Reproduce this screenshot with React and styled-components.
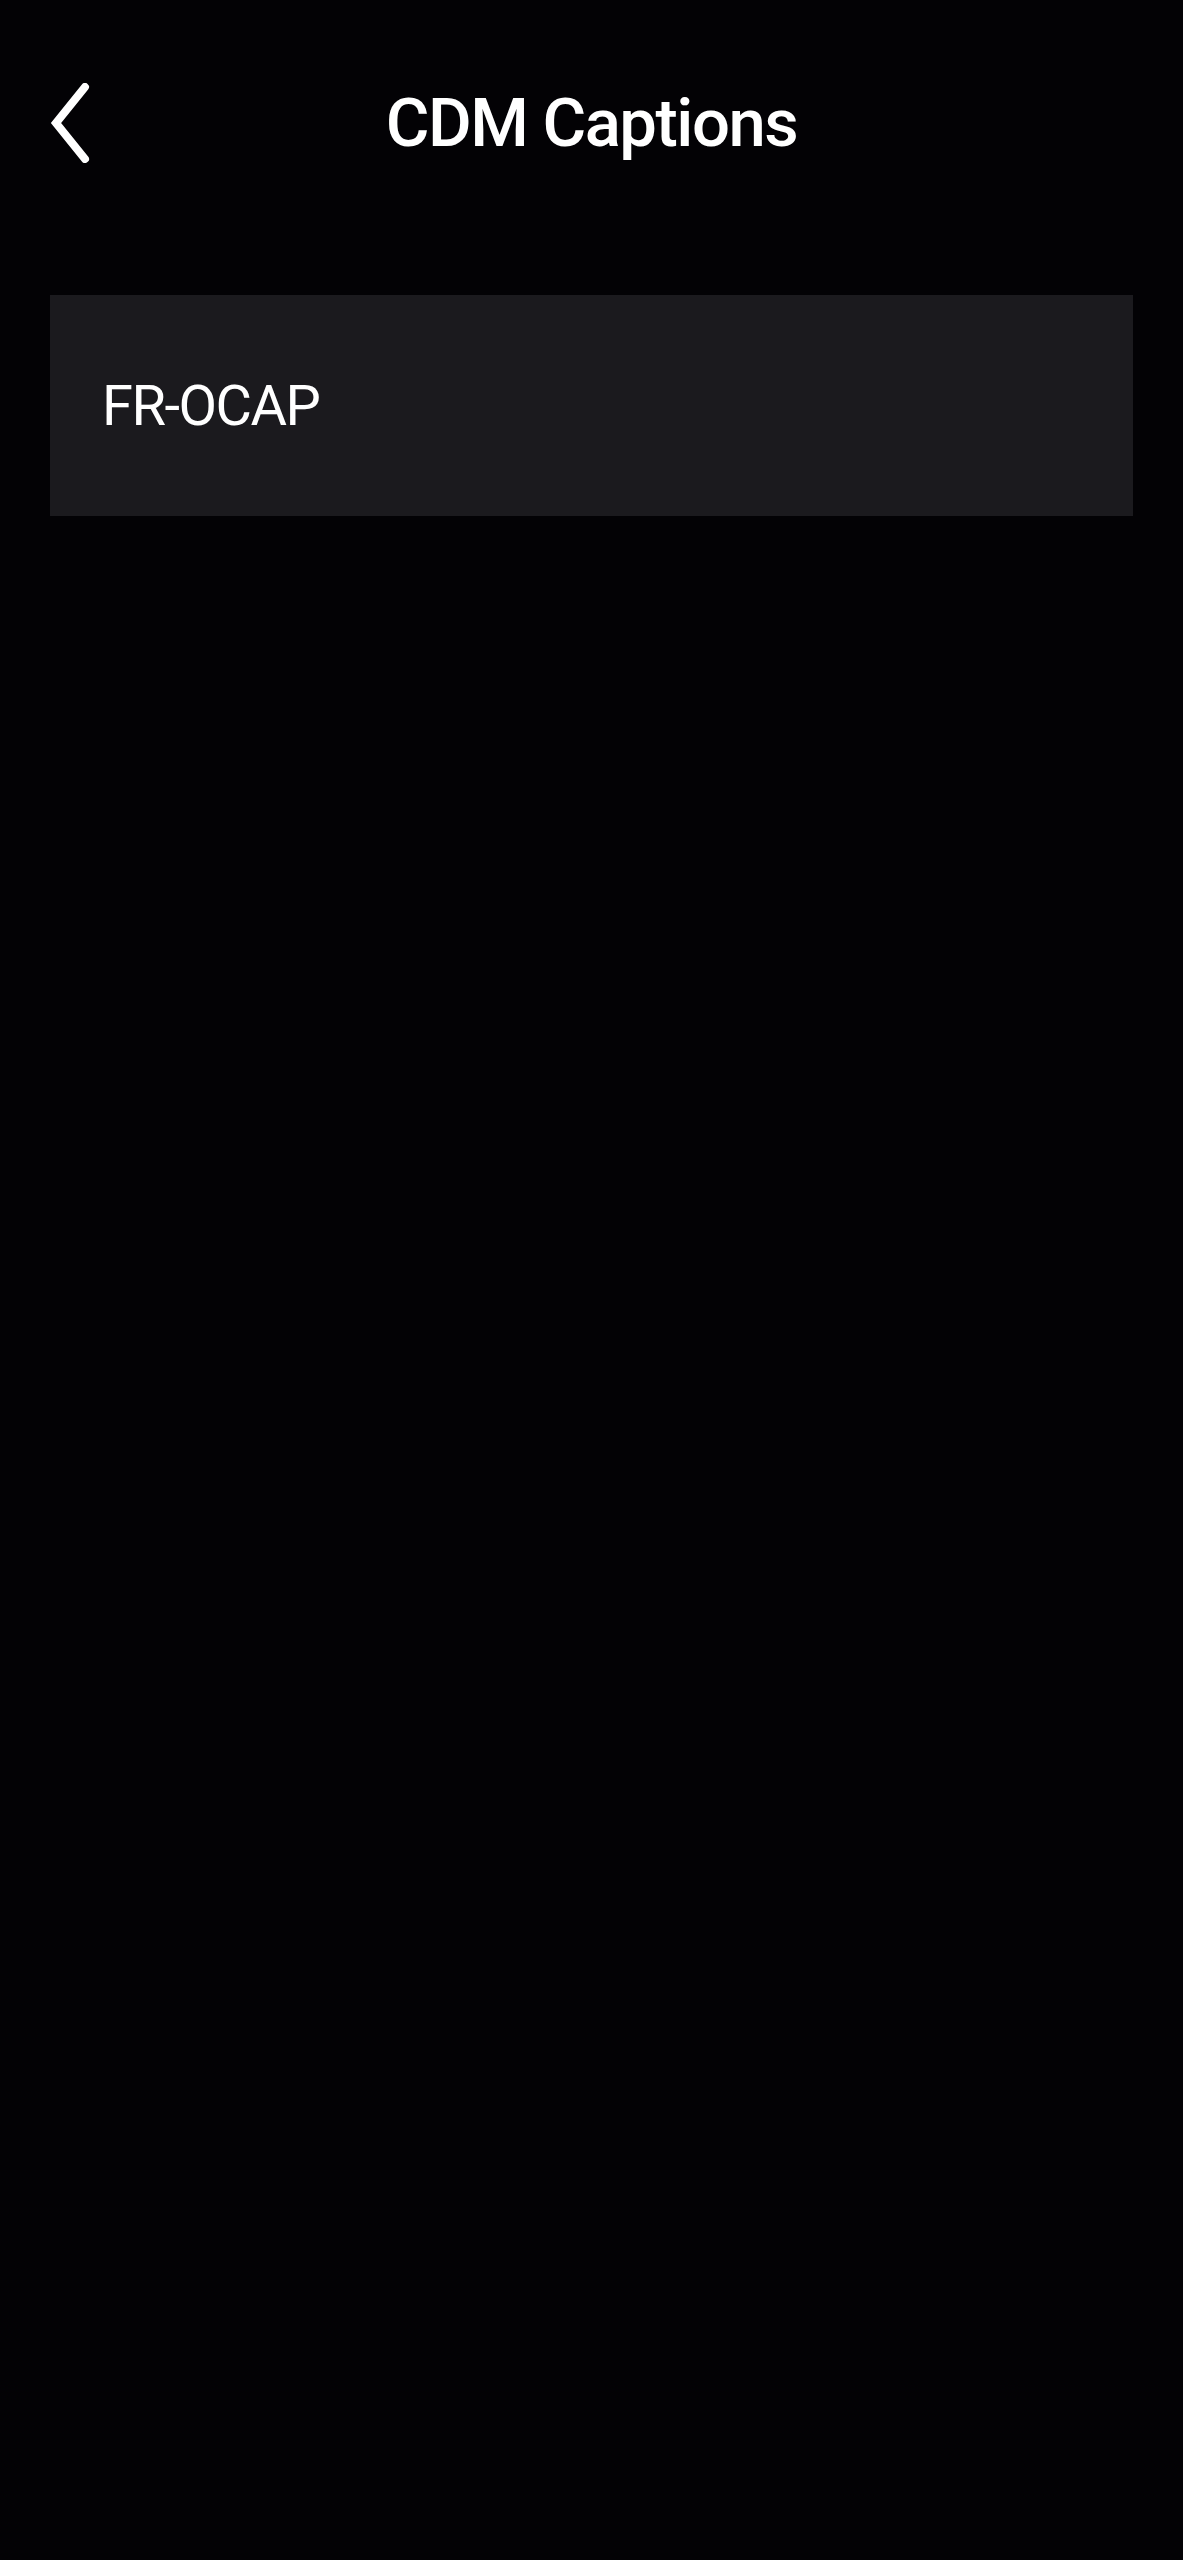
import styled, { createGlobalStyle } from "styled-components"

const GlobalStyle = createGlobalStyle`
    html, body {
        margin: 0;
        padding: 0;
        background-color: #030205;
    }

    body {
        font-family: Roboto, "Noto Sans", "Liberation Sans", sans-serif;
        color: #ffffff;
    }
`

const Screen = styled.div`
    min-height: 2560px;
    background-color: #030205;
    display: flex;
    flex-direction: column;
`

const Header = styled.header`
    height: 246px;
    display: grid;
    grid-template-columns: 1fr auto 1fr;
    align-items: center;
    padding: 0 50px;
`

const BackButton = styled.button`
    justify-self: start;
    display: flex;
    align-items: center;
    padding: 0;
    margin: 0;
    border: none;
    background: none;
    color: #ffffff;
    cursor: pointer;
`

const Title = styled.h1`
    margin: 0;
    font-size: 67px;
    font-weight: 500;
    letter-spacing: -1.5px;
    line-height: 1;
`

const List = styled.div`
    display: flex;
    flex-direction: column;
    gap: 16px;
    padding: 49px 50px 0;
`

const Item = styled.div`
    height: 221px;
    display: flex;
    align-items: center;
    padding: 0 52px;
    background-color: #1b1a1e;
`

const ItemLabel = styled.span`
    font-size: 56px;
    font-weight: 400;
    letter-spacing: -1.5px;
`

const Chevron = () => (
    <svg width="40" height="80" viewBox="0 0 40 80" fill="none">
        <polyline
            points="35,4 6,40 35,76"
            stroke="currentColor"
            strokeWidth="8"
            strokeLinecap="round"
            strokeLinejoin="miter"
        />
    </svg>
)

const captions = [{ id: "fr-ocap", name: "FR-OCAP" }]

const App = () => {
    return (
        <>
            <GlobalStyle />
            <Screen>
                <Header>
                    <BackButton aria-label="Back">
                        <Chevron />
                    </BackButton>
                    <Title>CDM Captions</Title>
                    <span />
                </Header>
                <List>
                    {captions.map((c) => (
                        <Item key={c.id}>
                            <ItemLabel>{c.name}</ItemLabel>
                        </Item>
                    ))}
                </List>
            </Screen>
        </>
    )
}

export default App
